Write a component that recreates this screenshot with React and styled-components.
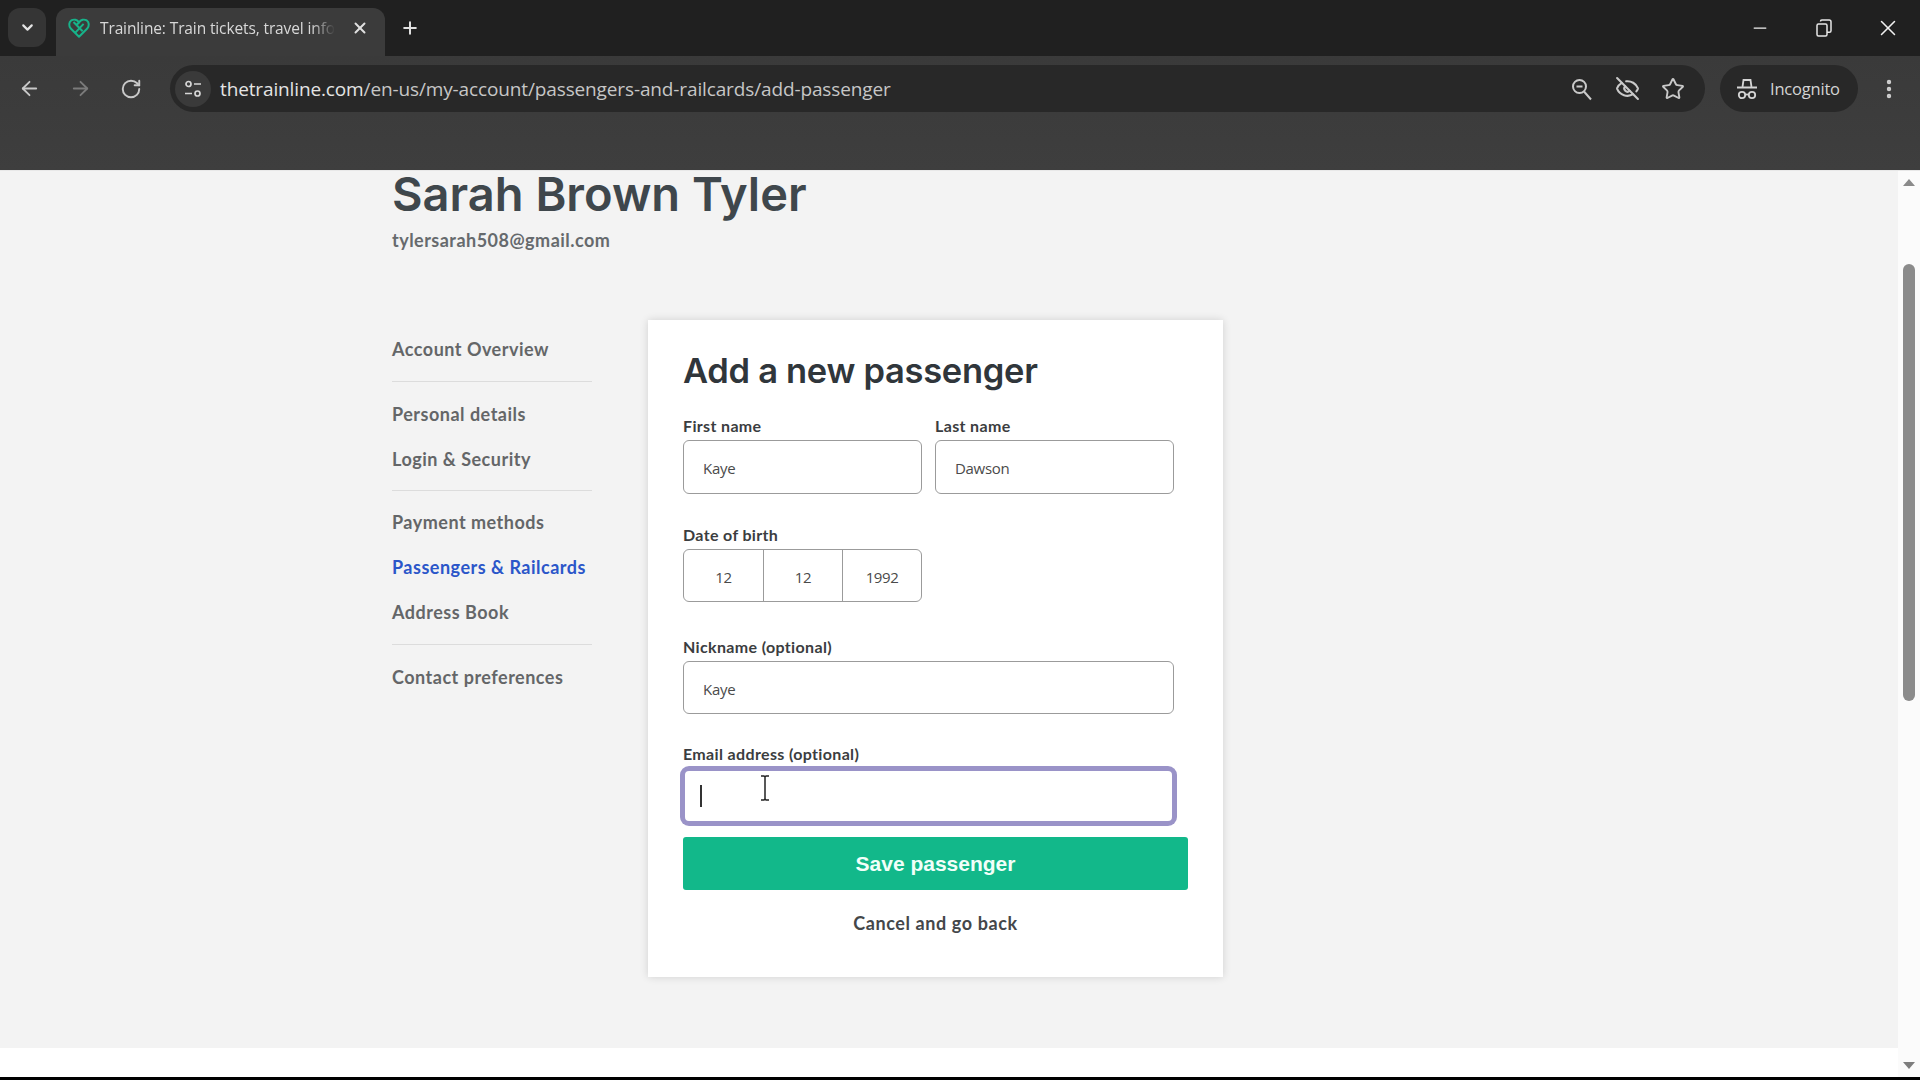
import React from "react";
import styled, { createGlobalStyle } from "styled-components";
import { ChevronDown, X, Plus, ArrowLeft, ArrowRight, RotateCw, Minus, Star, EyeOff, EllipsisVertical } from "lucide-react";

const Global = createGlobalStyle`
  html, body { margin: 0; padding: 0; height: 100%; overflow: hidden; background: #000; }
  * { box-sizing: border-box; }
`;

const Screen = styled.div`
  width: 1920px; height: 1080px; display: flex; flex-direction: column; position: relative;
  font-family: "Lato", "Liberation Sans", sans-serif;
`;
const TabStrip = styled.div`
  height: 56px; background: #202020; display: flex; align-items: flex-end; padding-left: 8px; flex: none;
  color: #e2e2e2;
`;
const TabMenu = styled.div`
  width: 38px; height: 39px; margin-bottom: 9px; border-radius: 12px; background: #353535;
  display: flex; align-items: center; justify-content: center;
`;
const Tab = styled.div`
  width: 329px; height: 48px; margin-left: 10px; background: #3b3b3b; border-radius: 12px 12px 0 0;
  display: flex; align-items: center; padding: 0 16px 8px 12px; gap: 10px;
`;
const TabTitle = styled.div`
  flex: 1; margin-right: 6px; overflow: hidden; white-space: nowrap; font: 15.5px "Open Sans", sans-serif; letter-spacing: -0.12px; color: #d8d8d8;
  -webkit-mask-image: linear-gradient(to right, #000 90%, transparent 100%);
  mask-image: linear-gradient(to right, #000 90%, transparent 100%);
`;
const NewTab = styled.div`
  width: 24px; height: 48px; margin-left: 13px; padding-bottom: 8px; display: flex; align-items: center; justify-content: center;
`;
const WindowControls = styled.div`
  margin-left: auto; height: 56px; display: flex; align-items: center;
`;
const WindowSlot = styled.div`
  width: 64px; height: 56px; display: flex; align-items: center; justify-content: center;
`;
const Toolbar = styled.div`
  height: 114px; flex: none; background: linear-gradient(#3a3a3a, #3e3e3e); padding: 9px 0 0 18px;
  display: flex; align-items: flex-start; color: #c9c9c9;
`;
const NavIcons = styled.div`
  width: 152px; height: 47px; display: flex; align-items: center; gap: 28px;
`;
const Omnibox = styled.div`
  width: 1535px; height: 47px; background: #282828; border-radius: 24px; display: flex; align-items: center; padding: 0 20px 0 5px;
`;
const SiteButton = styled.div`
  width: 36px; height: 36px; border-radius: 50%; background: #3a3a3a; display: flex; align-items: center; justify-content: center; margin-right: 9px;
`;
const Url = styled.div`
  flex: 1; font: 19px "Open Sans", sans-serif; letter-spacing: -0.13px; color: #c6c6c6; white-space: nowrap;
  b { font-weight: 400; color: #e4e4e4; }
`;
const OmniIcons = styled.div`
  display: flex; align-items: center; gap: 21px;
`;
const Incognito = styled.div`
  width: 138px; height: 47px; margin-left: 15px; background: #282828; border-radius: 24px; display: flex; align-items: center; padding-left: 16px; gap: 12px;
  font: 16.5px "Open Sans", sans-serif; letter-spacing: -0.2px; color: #d4d4d4;
`;
const MenuDots = styled.div`
  width: 62px; height: 47px; display: flex; align-items: center; justify-content: center;
`;
const Viewport = styled.div`
  flex: 1; min-height: 0; display: flex; border-top: 1px solid #e8e8e8;
`;
const PageColumn = styled.div`
  flex: 1; display: flex; flex-direction: column;
`;
const Content = styled.div`
  flex: 1; background: #f3f3f3; padding-left: 392px; min-height: 0;
`;
const SiteFooter = styled.div`
  height: 29px; flex: none; background: #ffffff;
`;
const ScrollTrack = styled.div`
  width: 22px; flex: none; background: #fbfbfb; display: flex; flex-direction: column; align-items: center; padding: 8px 0 8px;
`;
const ArrowUp = styled.div`
  width: 0; height: 0; border-left: 6px solid transparent; border-right: 6px solid transparent; border-bottom: 7px solid #8a8a8a;
`;
const ArrowDown = styled.div`
  margin-top: auto; width: 0; height: 0; border-left: 6px solid transparent; border-right: 6px solid transparent; border-top: 7px solid #7d7d7d;
`;
const Thumb = styled.div`
  width: 12px; height: 437px; margin-top: 78px; background: #8b8b8b; border-radius: 6px;
`;
const BlackEdge = styled.div`
  height: 3px; flex: none; background: #000;
`;
const Name = styled.h1`
  margin: -2px 0 0; font: 600 47px/50px "Inter", sans-serif; color: #3f474c; white-space: nowrap;
`;
const AccountEmail = styled.div`
  margin-top: 9px; font: 700 18px/24px "Lato", sans-serif; color: #666a6d; letter-spacing: 0.48px;
`;
const Columns = styled.div`
  margin-top: 68px; display: flex; align-items: flex-start; gap: 56px;
`;
const SideNav = styled.nav`
  width: 200px; padding-top: 17px; display: flex; flex-direction: column;
`;
const NavGroup = styled.div`
  display: flex; flex-direction: column; gap: 21px;
`;
const NavItem = styled.a`
  font: 700 18px/24px "Lato", sans-serif; letter-spacing: 0.5px; white-space: nowrap;
  color: ${p => (p.$active ? "#2b56c9" : "#646668")};
`;
const NavRule = styled.div`
  height: 1px; background: #dcdcdc; margin: ${p => p.$space || 20}px 0;
`;
const Card = styled.div`
  width: 575px; height: 657px; background: #fff; box-shadow: 0 0 8px rgba(0,0,0,0.14); padding: 30px 36px 0 35px;
`;
const CardTitle = styled.h2`
  margin: 0; font: 600 34.5px/42px "Inter", sans-serif; color: #30363b; letter-spacing: -0.3px; white-space: nowrap;
`;
const Row = styled.div`
  display: grid; grid-template-columns: 239px 239px; gap: 13px; width: 491px; margin-top: 24px;
`;
const Field = styled.div`
  margin-top: ${p => p.$top || 0}px; width: ${p => p.$width || "491px"};
`;
const Label = styled.label`
  display: block; font: 700 16px/20px "Lato", sans-serif; letter-spacing: 0.35px; color: #3b3d40; margin-bottom: ${p => p.$gap || 4}px; white-space: nowrap;
`;
const TextInput = styled.input`
  display: block; width: 100%; height: ${p => p.$height || 54}px; border: 1.5px solid #9b9b9b; border-radius: 6px; background: #fff; outline: none;
  padding: 2px 0 0 19px; font: 15px "Open Sans", sans-serif; letter-spacing: -0.3px; color: #4a4a4a;
  &[data-focus="true"] { border: 2px solid #9a93c8; box-shadow: 0 0 0 3px #9a93c8; }
`;
const DateGroup = styled.div`
  width: 239px; height: 53px; border: 1.5px solid #9b9b9b; border-radius: 6px; display: grid; grid-template-columns: 79px 79px 1fr;
`;
const DatePart = styled.div`
  display: flex; align-items: center; justify-content: center; padding-top: 2px; font: 15px "Open Sans", sans-serif; letter-spacing: -0.4px; color: #4a4a4a;
  border-left: ${p => (p.$first ? "none" : "1.5px solid #9b9b9b")};
`;
const FocusWrap = styled.div`
  position: relative;
`;
const Caret = styled.div`
  position: absolute; left: 17px; top: 16px; width: 2px; height: 22px; background: #333;
`;
const IBeam = styled.svg`
  position: absolute; left: 76px; top: 6px; width: 12px; height: 26px;
`;
const SaveButton = styled.button`
  display: block; width: 505px; height: 53px; margin-top: 14px; border: none; border-radius: 3px; background: #12b88a; color: #f1fff9;
  font: 700 21px "Liberation Sans", sans-serif;
`;
const CancelLink = styled.div`
  width: 505px; margin-top: 22px; text-align: center; font: 700 18px/22px "Lato", sans-serif; letter-spacing: 0.6px; color: #44474a;
`;

const TrainlineHeart = () => (
  <svg width="22" height="22" viewBox="0 0 24 24" fill="none" stroke="#17b38a" strokeWidth="2.2" strokeLinejoin="round">
    <path d="M12 21.5 3 12.5C.5 10 1 5.5 3.5 3.8 6.5 2 10 3 12 6c2-3 5.5-4 8.5-2.2 2.500 1.700 3 6.200.5 8.700Z" />
    <path d="M8 17 17 7.500M6 5.500l10 10M12 6 8.500 9.500" />
  </svg>
);
const TuneIcon = () => (
  <svg width="20" height="20" viewBox="0 0 20 20" fill="none" stroke="#d6d6d6" strokeWidth="1.7">
    <circle cx="5.500" cy="5" r="2.500" /><path d="M11 5h7M2 14.500h7" /><circle cx="14.500" cy="14.500" r="2.500" />
  </svg>
);
const MagnifierIcon = () => (
  <svg width="24" height="24" viewBox="0 0 24 24" fill="none" stroke="#c9c9c9" strokeWidth="2">
    <circle cx="9.500" cy="9.500" r="6.500" /><path d="M6.500 9.500h6M14 14.500l7 8" />
  </svg>
);
const IncognitoIcon = () => (
  <svg width="22" height="24" viewBox="0 0 22 24" fill="none" stroke="#d4d4d4" strokeWidth="1.800">
    <path d="M6.500 10 7.500 3h7l1 7" /><path d="M1 10.500h20" strokeWidth="2" />
    <circle cx="6" cy="18" r="3.200" /><circle cx="16" cy="18" r="3.200" /><path d="M9.200 17.500h3.600" />
  </svg>
);
const RestoreIcon = () => (
  <svg width="16" height="18" viewBox="0 0 16 18" fill="none" stroke="#e6e6e6" strokeWidth="1.500">
    <rect x="1" y="5" width="10" height="12" rx="1.500" /><path d="M4.500 2.500V2.200C4.500 1.500 5 1 5.800 1h7.400c.9 0 1.800.8 1.800 1.800v9c0 .9-.5 1.500-1.500 1.500H11" />
  </svg>
);

export default function App() {
  return (
    <Screen>
      <Global />
      <TabStrip>
        <TabMenu><ChevronDown size={17} strokeWidth={3} color="#e4e4e4" /></TabMenu>
        <Tab>
          <TrainlineHeart />
          <TabTitle>Trainline: Train tickets, travel information</TabTitle>
          <X size={18} strokeWidth={2.6} color="#e0e0e0" />
        </Tab>
        <NewTab><Plus size={20} strokeWidth={2.4} color="#e0e0e0" /></NewTab>
        <WindowControls>
          <WindowSlot><Minus size={20} strokeWidth={1.5} color="#f0f0f0" /></WindowSlot>
          <WindowSlot><RestoreIcon /></WindowSlot>
          <WindowSlot><X size={26} strokeWidth={1.4} color="#f0f0f0" /></WindowSlot>
        </WindowControls>
      </TabStrip>
      <Toolbar>
        <NavIcons>
          <ArrowLeft size={23} strokeWidth={1.9} color="#c9c9c9" />
          <ArrowRight size={23} strokeWidth={1.9} color="#7b7b7b" />
          <RotateCw size={22} strokeWidth={2.1} color="#c9c9c9" />
        </NavIcons>
        <Omnibox>
          <SiteButton><TuneIcon /></SiteButton>
          <Url><b>thetrainline.com</b>/en-us/my-account/passengers-and-railcards/add-passenger</Url>
          <OmniIcons>
            <MagnifierIcon />
            <EyeOff size={25} strokeWidth={2} color="#c9c9c9" />
            <Star size={24} strokeWidth={1.9} color="#c9c9c9" />
          </OmniIcons>
        </Omnibox>
        <Incognito><IncognitoIcon />Incognito</Incognito>
        <MenuDots><EllipsisVertical size={24} strokeWidth={2.4} color="#cfcfcf" /></MenuDots>
      </Toolbar>
      <Viewport>
        <PageColumn>
          <Content>
            <Name>Sarah Brown Tyler</Name>
            <AccountEmail>tylersarah508@gmail.com</AccountEmail>
            <Columns>
              <SideNav>
                <NavGroup><NavItem>Account Overview</NavItem></NavGroup>
                <NavRule />
                <NavGroup><NavItem>Personal details</NavItem><NavItem>Login &amp; Security</NavItem></NavGroup>
                <NavRule $space={19} />
                <NavGroup><NavItem>Payment methods</NavItem><NavItem $active>Passengers &amp; Railcards</NavItem><NavItem>Address Book</NavItem></NavGroup>
                <NavRule />
                <NavGroup><NavItem>Contact preferences</NavItem></NavGroup>
              </SideNav>
              <Card>
                <CardTitle>Add a new passenger</CardTitle>
                <Row>
                  <Field $width="239px"><Label>First name</Label><TextInput readOnly value="Kaye" /></Field>
                  <Field $width="239px"><Label>Last name</Label><TextInput readOnly value="Dawson" /></Field>
                </Row>
                <Field $top={31}>
                  <Label $gap={4}>Date of birth</Label>
                  <DateGroup>
                    <DatePart $first>12</DatePart><DatePart>12</DatePart><DatePart>1992</DatePart>
                  </DateGroup>
                </Field>
                <Field $top={35}><Label $gap={4}>Nickname (optional)</Label><TextInput $height={53} readOnly value="Kaye" /></Field>
                <Field $top={30}>
                  <Label $gap={5}>Email address (optional)</Label>
                  <FocusWrap>
                    <TextInput $height={54} data-focus="true" readOnly value="" />
                    <Caret />
                    <IBeam viewBox="0 0 12 26" fill="none" stroke="#222" strokeWidth="1.500">
                      <path d="M2 1h3l1 1 1-1h3M6 2v22M2 25h3l1-1 1 1h3" />
                    </IBeam>
                  </FocusWrap>
                </Field>
                <SaveButton>Save passenger</SaveButton>
                <CancelLink>Cancel and go back</CancelLink>
              </Card>
            </Columns>
          </Content>
          <SiteFooter />
        </PageColumn>
        <ScrollTrack><ArrowUp /><Thumb /><ArrowDown /></ScrollTrack>
      </Viewport>
      <BlackEdge />
    </Screen>
  );
}
